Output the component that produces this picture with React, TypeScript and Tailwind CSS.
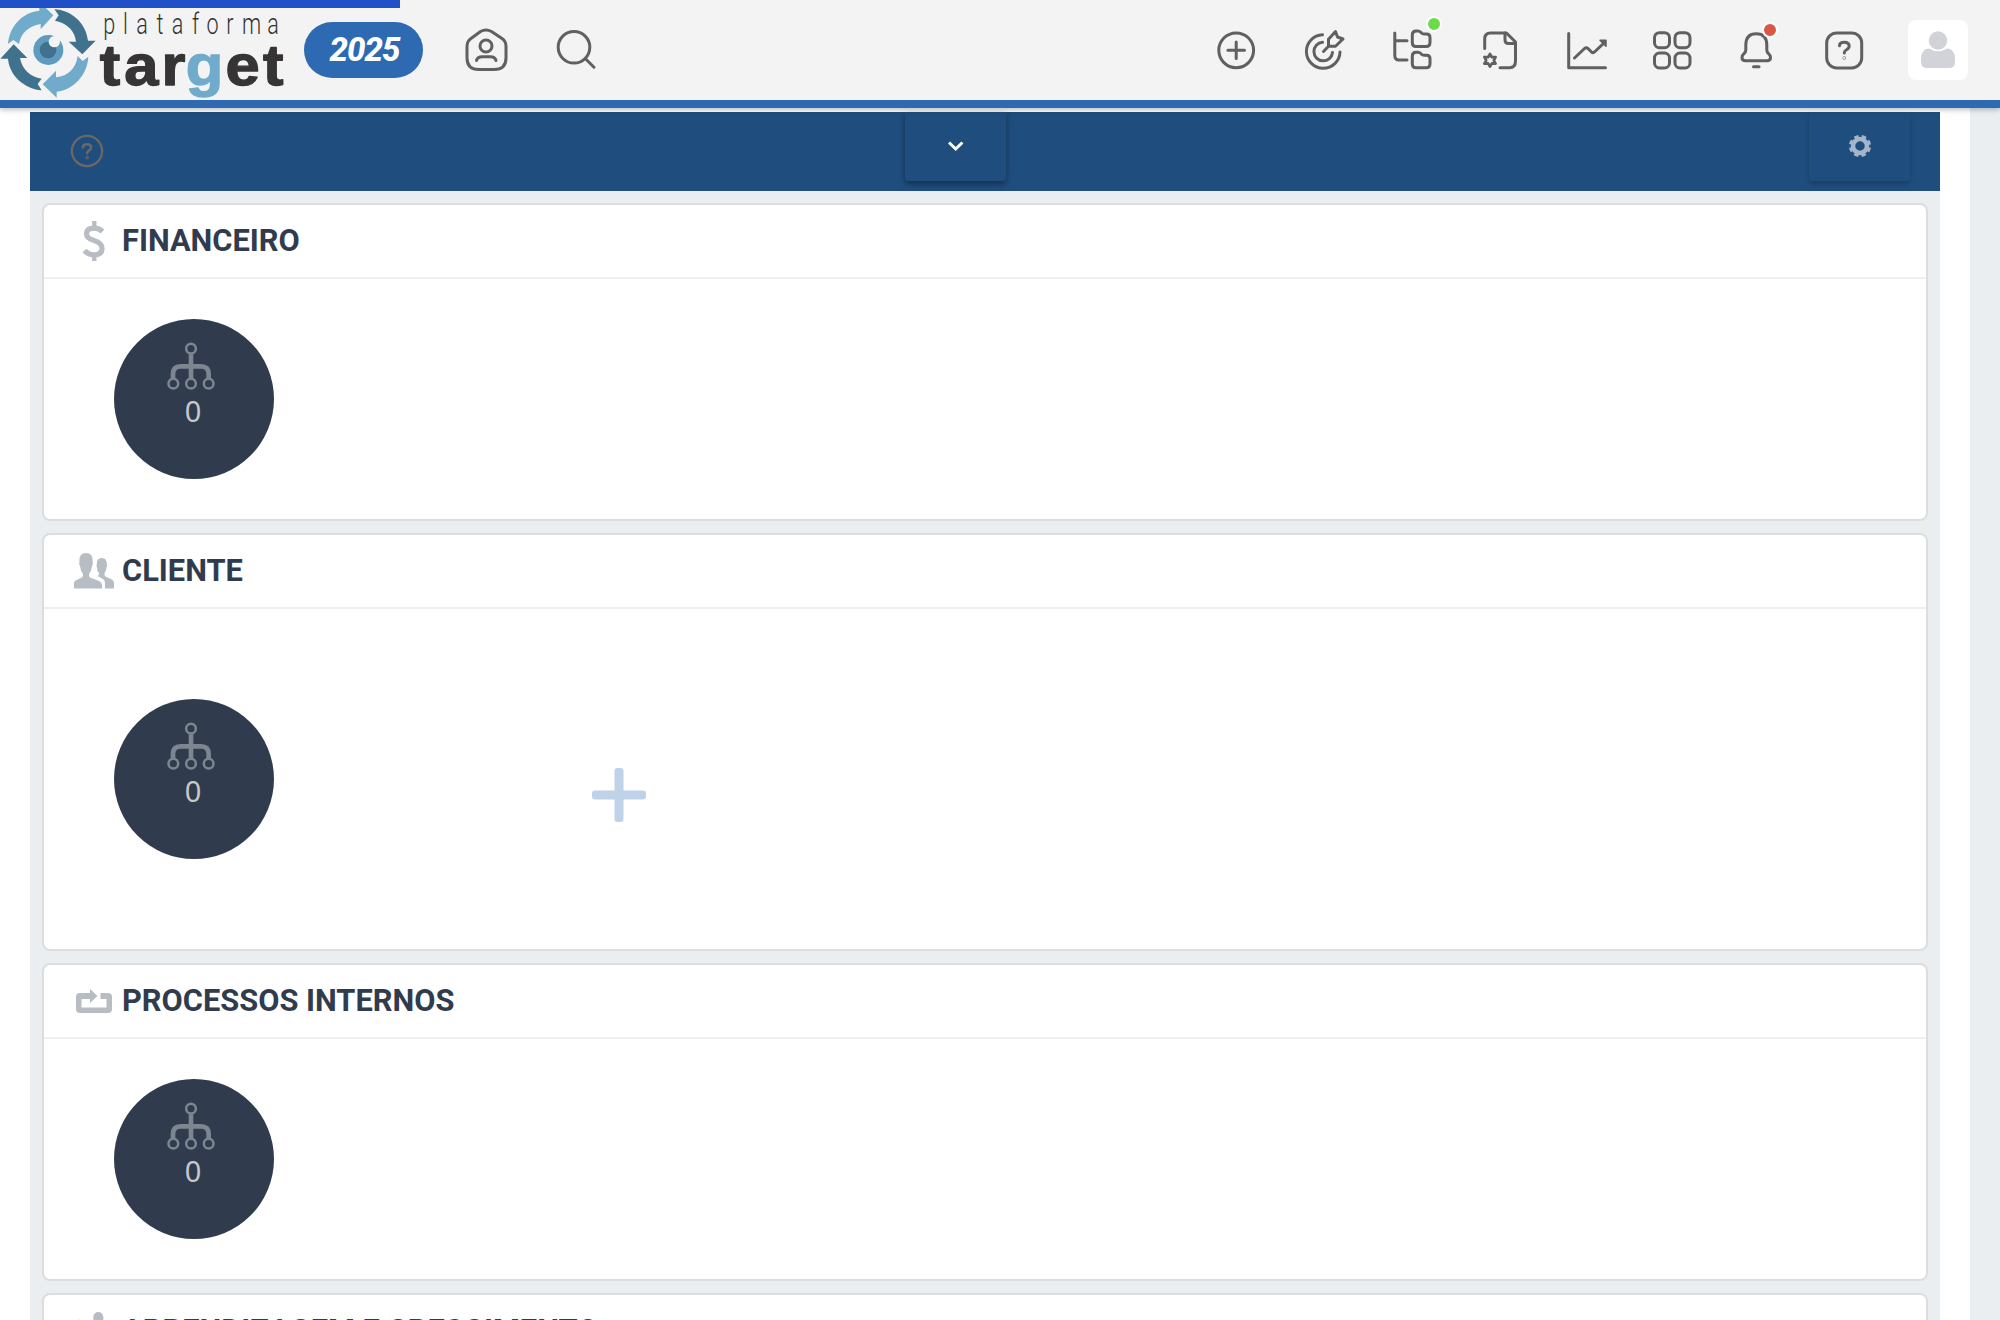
import type { ReactNode } from "react";

function HeaderIcon({ x, w, className = "", children }: { x: number; w: number; className?: string; children: ReactNode }) {
  return (
    <svg
      className={`h-[60px] shrink-0 overflow-visible ${className}`}
      width={w}
      height={60}
      viewBox={`${x} 20 ${w} 60`}
      fill="none"
      stroke="#606060"
      strokeWidth={3}
      strokeLinecap="round"
      strokeLinejoin="round"
    >
      {children}
    </svg>
  );
}

function Logo() {
  return (
    <svg className="h-[100px] w-[300px] shrink-0" viewBox="0 0 900 300">
      <path fill="#71abcb" d="M24 132C28 80 65 38 118 32V22H135L160 46L122 88V72C85 78 62 100 57 132L40 120Z" />
      <path fill="#41728d" d="M163 28C215 30 258 70 264 122H287L247 163L206 125H228C225 95 205 70 165 62L176 46Z" />
      <path fill="#71abcb" d="M265 170C262 225 220 270 170 275V293L128 253L168 212V232C205 228 228 205 233 168L248 183Z" />
      <path fill="#41728d" d="M125 271C70 265 28 225 24 176H1L41 133L82 174H60C65 205 90 232 125 236L113 252Z" />
      <circle cx="145" cy="150" r="45" fill="#5e9bbf" />
      <circle cx="144" cy="150" r="25" fill="#41728d" />
      <circle cx="163" cy="125" r="17" fill="#f3f3f3" />
      <g transform="scale(0.72 1)" fill="#333" fontFamily="Roboto, sans-serif" fontWeight="300" fontSize="90">
        <text y="101" x="430 512 568 652 716 800 860 943 1008 1114">plataforma</text>
      </g>
      <g
        transform="scale(1.06 1)"
        fontFamily="'Liberation Sans', sans-serif"
        fontWeight="700"
        fontSize="174"
        fill="#373435"
        stroke="#373435"
        strokeWidth="4"
        strokeLinejoin="round"
      >
        <text y="256" x="282 352 457">tar</text>
        <text y="256" x="526" fill="#71abcb" stroke="#71abcb">g</text>
        <text y="256" x="638 744">et</text>
      </g>
    </svg>
  );
}

function Header() {
  return (
    <header className="relative z-10 flex h-[108px] shrink-0 items-center border-b-8 border-[#2d6ab1] bg-[#f3f3f3] shadow-[0_2px_5px_rgba(0,0,0,0.25)]">
      <div className="absolute top-0 left-0 h-2 w-[400px] bg-[#1f50c8]" />
      <Logo />
      <div className="ml-1 flex h-14 w-[119px] items-center justify-center rounded-full bg-[#2d6ab1] pl-0.5 font-[Roboto] text-[33px] font-extrabold tracking-[-1px] text-white italic">
        2025
      </div>

      <HeaderIcon x={460} w={52} className="ml-[37px]">
        <path d="M480.5 31.5Q486 28.5 491.500 31.500L502 38.500Q506 41.500 506 46V58Q506 69.500 494 69.500H479Q467 69.500 467 58V46Q467 41.500 471 38.500Z" />
        <circle cx="486" cy="46" r="6" />
        <path d="M476.500 60.500Q477.500 56.700 482 56.700H490.500Q495 56.700 496 60.500" />
      </HeaderIcon>
      <HeaderIcon x={550} w={50} className="ml-[38px]">
        <circle cx="574" cy="47.300" r="15.800" />
        <path d="M585.500 58.800L594 67.200" />
      </HeaderIcon>

      <HeaderIcon x={1210} w={52} className="ml-auto">
        <circle cx="1236.200" cy="50.300" r="17.400" />
        <path d="M1236.200 42V58.600M1227.900 50.300H1244.500" />
      </HeaderIcon>
      <HeaderIcon x={1300} w={50} className="ml-[38px]">
        <path d="M1322.500 34.700A16.800 16.800 0 1 0 1340 52" />
        <path d="M1322.500 42.300A9.300 9.300 0 1 0 1332.500 52.500" />
        <path d="M1323.500 51.500L1328.500 46.300M1328.500 46.300V39.300L1335.500 31.500L1337.500 37L1343 39L1335.500 46.300Z" />
      </HeaderIcon>
      <HeaderIcon x={1385} w={60} className="ml-[35px]">
        <path d="M1394.800 33V55.500Q1394.800 60 1399 60H1407M1394.800 40.700H1407" />
        <path d="M1412.300 35Q1412.300 31 1416 31H1418Q1420 31 1421.500 33Q1422.500 34 1424 34H1426.500Q1430 34 1430 37.500V42.500Q1430 46.500 1426 46.500H1416Q1412.300 46.500 1412.300 42.500Z" />
        <path d="M1412.300 56.200Q1412.300 52.200 1416 52.200H1418Q1420 52.200 1421.500 54.200Q1422.500 55.200 1424 55.200H1426.500Q1430 55.200 1430 58.700V63.700Q1430 67.700 1426 67.700H1416Q1412.300 67.700 1412.300 63.700Z" />
        <circle cx="1434" cy="24" r="7" fill="#6bdb49" stroke="#fff" strokeWidth="2" />
      </HeaderIcon>
      <HeaderIcon x={1478} w={44} className="ml-[33px]">
        <path d="M1484.700 48.500V39Q1484.700 33 1490.500 33H1506.500L1515.500 42V61Q1515.500 67.700 1509.500 67.700H1500" />
        <path d="M1505 33V40Q1505 43.500 1508.500 43.500H1515" />
        <path strokeWidth="2.700" d="M1490 54L1491.900 57.200L1495.600 57L1493.800 60.300L1495.600 63.600L1491.900 63.400L1490 66.600L1488.100 63.400L1484.400 63.600L1486.200 60.300L1484.400 57L1488.100 57.200Z" />
      </HeaderIcon>
      <HeaderIcon x={1564} w={48} className="ml-[42px]">
        <path d="M1568.700 33.500V67.700H1605.500M1574.500 58L1584.500 48.500Q1586.200 47 1588 48.500L1591.500 52Q1593 53.500 1595 51.500L1604 43" />
        <path fill="#606060" strokeWidth="1.500" d="M1600 40.200H1606V46.200Z" />
      </HeaderIcon>
      <HeaderIcon x={1650} w={44} className="ml-[38px]">
        <rect x="1654.500" y="32.700" width="15" height="15" rx="5" />
        <rect x="1675" y="32.700" width="15" height="15" rx="5" />
        <rect x="1654.500" y="53" width="15" height="15" rx="5" />
        <rect x="1675" y="53" width="15" height="15" rx="5" />
      </HeaderIcon>
      <HeaderIcon x={1736} w={44} className="ml-[42px]">
        <path d="M1745.800 45Q1745.800 33.700 1756.300 33.700Q1766.800 33.700 1766.800 45V50Q1766.800 52 1768.500 53.700Q1770.500 55.500 1770.500 57.500Q1770.500 60.800 1767 60.800H1745.500Q1742 60.800 1742 57.500Q1742 55.500 1744 53.700Q1745.800 52 1745.800 50Z" />
        <path d="M1753.500 66.700H1759" />
        <circle cx="1770" cy="30" r="7" fill="#d95745" stroke="#fff" strokeWidth="2" />
      </HeaderIcon>
      <HeaderIcon x={1822} w={44} className="ml-[42px]">
        <rect x="1826.700" y="32.900" width="35" height="35" rx="10" />
        <path d="M1839.500 45.800Q1839.500 42.300 1844.300 42.300Q1849.200 42.300 1849.200 46.300Q1849.200 48.200 1846.500 49.800Q1844.300 51 1844.300 53" />
        <circle cx="1844.300" cy="58" r="0.300" />
      </HeaderIcon>
      <div className="mr-8 ml-[42px] flex size-[60px] items-center justify-center rounded-lg bg-white">
        <svg className="h-[38px] w-9" viewBox="0 0 36 38" fill="#d2d3d8">
          <path d="M1 28Q1 18 9 17.500Q18 23 27 17.500Q35 18 35 28V31Q35 37 29 37H7Q1 37 1 31Z" />
          <circle cx="18" cy="9.500" r="9.200" />
        </svg>
      </div>
    </header>
  );
}

function Toolbar() {
  return (
    <div className="flex h-[79px] shrink-0 items-start bg-[#1f4e7e]">
      <svg className="mt-[22px] ml-10 h-[34px] w-[34px]" viewBox="0 0 34 34" fill="none" stroke="#6a6867" strokeWidth="2.300" strokeLinecap="round">
        <circle cx="17" cy="17" r="15.100" />
        <path strokeWidth="2.600" d="M12.800 13.500Q13.200 10.200 17 10.200Q21 10.200 21 13.400Q21 15.200 19 16.500Q17.200 17.700 17.200 19.300" />
        <circle cx="17.200" cy="23.700" r="0.500" />
      </svg>
      <div className="ml-[801px] flex h-[69px] w-[101px] items-center justify-center rounded-b bg-[#1f4e7e] pb-0.5 shadow-[0_3px_6px_rgba(0,0,0,0.4)]">
        <svg className="h-3 w-4" viewBox="0 0 16 12" fill="none" stroke="#fff" strokeWidth="3">
          <path d="M1 2.500L7.700 9L14.400 2.500" />
        </svg>
      </div>
      <div className="mr-[30px] ml-auto flex h-[69px] w-[101px] items-center justify-center rounded-b pb-0.5 shadow-[0_3px_5px_rgba(0,0,0,0.2)]">
        <svg className="h-6 w-6" viewBox="-12 -12 24 24" fill="none" stroke="#a3b6cc">
          <circle r="7" strokeWidth="4.500" />
          <circle r="9.500" strokeWidth="3.200" strokeDasharray="4.300 3.161" strokeDashoffset="-1.500" />
        </svg>
      </div>
    </div>
  );
}

function DollarIcon() {
  return (
    <svg className="h-11 w-10 shrink-0" viewBox="74 219 40 44" fill="none" stroke="#b8bdc4" strokeWidth="5.200">
      <path d="M102.500 231.500Q99 228.200 94.500 228.200Q86.500 228.200 86.500 233.800Q86.500 238.500 94 240.500Q102 242.800 102 248.500Q102 254.800 94 254.800Q88 254.800 84.500 250.500" />
      <path strokeWidth="4.300" d="M94.300 221V229M94.300 254V261" />
    </svg>
  );
}

function UsersIcon() {
  return (
    <svg className="h-11 w-10 shrink-0" viewBox="74 549 40 44" fill="#b8bdc4">
      <path d="M74 588.600V583Q74 581 76.500 580L82 577.500Q83.500 576.500 83 574Q80.500 571 80 566Q78.500 564 79.500 561Q79 553 86 553Q93 553 92.500 561Q93.500 564 92 566Q91.500 571 89 574Q88.500 576.500 90 577.500L99 581Q102 582.500 102 585V588.600Z" />
      <path d="M105 588.600V583Q105 580 102 578.500L97.500 576Q99.500 575.500 99 573Q97 571 97 567.500Q96 566 96.800 564Q96.500 558 101.800 558Q107 558 106.800 564Q107.500 566 106.500 567.500Q106 571 104.500 573Q104 575.500 105.500 576.500L112 579.500Q114 580.500 114 583V588.600Z" />
    </svg>
  );
}

function LoopIcon() {
  return (
    <svg className="h-11 w-10 shrink-0" viewBox="74 979 40 44" fill="#b8bdc4">
      <path d="M80 993H90V989L97.500 996L90 1003V999H81.500V1007.500H106.500V999H100.500V993H108Q112 993 112 997V1009Q112 1013 108 1013H80Q76 1013 76 1009V997Q76 993 80 993Z" />
    </svg>
  );
}

function PersonIcon() {
  return (
    <svg className="h-11 w-10 shrink-0" viewBox="74 1309 40 44" fill="#b8bdc4">
      <path d="M93.300 1317A5 5 0 0 1 103.300 1317V1324H93.300Z" />
      <circle cx="79.500" cy="1324.700" r="5" />
      <circle cx="113" cy="1325.500" r="5" />
    </svg>
  );
}

function Indicator() {
  return (
    <div className="relative size-40 rounded-full bg-[#303c4d]">
      <svg className="absolute top-[22px] left-[52px] h-[52px] w-[50px]" viewBox="228 123 150 156" fill="none" stroke="#7d8690">
        <g strokeWidth="14">
          <path d="M303 163V235M249 236V222Q249 199 272 199H333Q356 199 356 222V236" />
        </g>
        <g strokeWidth="7.500">
          <circle cx="303" cy="146" r="14.500" />
          <circle cx="250" cy="251" r="14.500" />
          <circle cx="303" cy="251" r="14.500" />
          <circle cx="356" cy="251" r="14.500" />
        </g>
      </svg>
      <span className="absolute top-[72px] left-0 w-[158px] text-center font-['Noto_Sans'] text-[29px] leading-[40px] text-[#c6c8ca]">0</span>
    </div>
  );
}

function Card({ title, icon, tall, children }: { title: string; icon: ReactNode; tall?: boolean; children?: ReactNode }) {
  return (
    <section className="shrink-0 rounded-lg border-2 border-[#dcdddd] bg-white">
      <div className="flex h-[74px] items-center border-b-2 border-[#efefef] pl-[30px]">
        {icon}
        <h2 className="ml-2 font-[Roboto] text-[30.800px] leading-10 font-bold whitespace-nowrap text-[#303c4d]">{title}</h2>
      </div>
      <div className={`flex items-center pl-[70px] ${tall ? "h-[340px]" : "h-60"}`}>
        <Indicator />
        {children}
      </div>
    </section>
  );
}

export default function App() {
  return (
    <div className="flex h-[1320px] w-[2000px] flex-col overflow-hidden bg-white">
      <Header />
      <div className="flex min-h-0 flex-1">
        <main className="mx-[30px] mt-1 flex w-[1910px] flex-col bg-[#eaeef1]">
          <Toolbar />
          <div className="flex flex-col gap-3 p-3">
            <Card title="FINANCEIRO" icon={<DollarIcon />} />
            <Card title="CLIENTE" icon={<UsersIcon />} tall>
              <svg className="mt-8 ml-[317px] h-[56px] w-[56px]" viewBox="0 0 56 56" fill="#bfd2e7">
                <path d="M23.500 4Q23.500 1 26.500 1H29.500Q32.500 1 32.500 4V23.500H52Q55 23.500 55 26.500V29.500Q55 32.500 52 32.500H32.500V52Q32.500 55 29.500 55H26.500Q23.500 55 23.500 52V32.500H4Q1 32.500 1 29.500V26.500Q1 23.500 4 23.500H23.500Z" />
              </svg>
            </Card>
            <Card title="PROCESSOS INTERNOS" icon={<LoopIcon />} />
            <Card title="APRENDIZAGEM E CRESCIMENTO" icon={<PersonIcon />} />
          </div>
        </main>
        <div className="w-[30px] shrink-0 bg-[#eaeef1]" />
      </div>
    </div>
  );
}
